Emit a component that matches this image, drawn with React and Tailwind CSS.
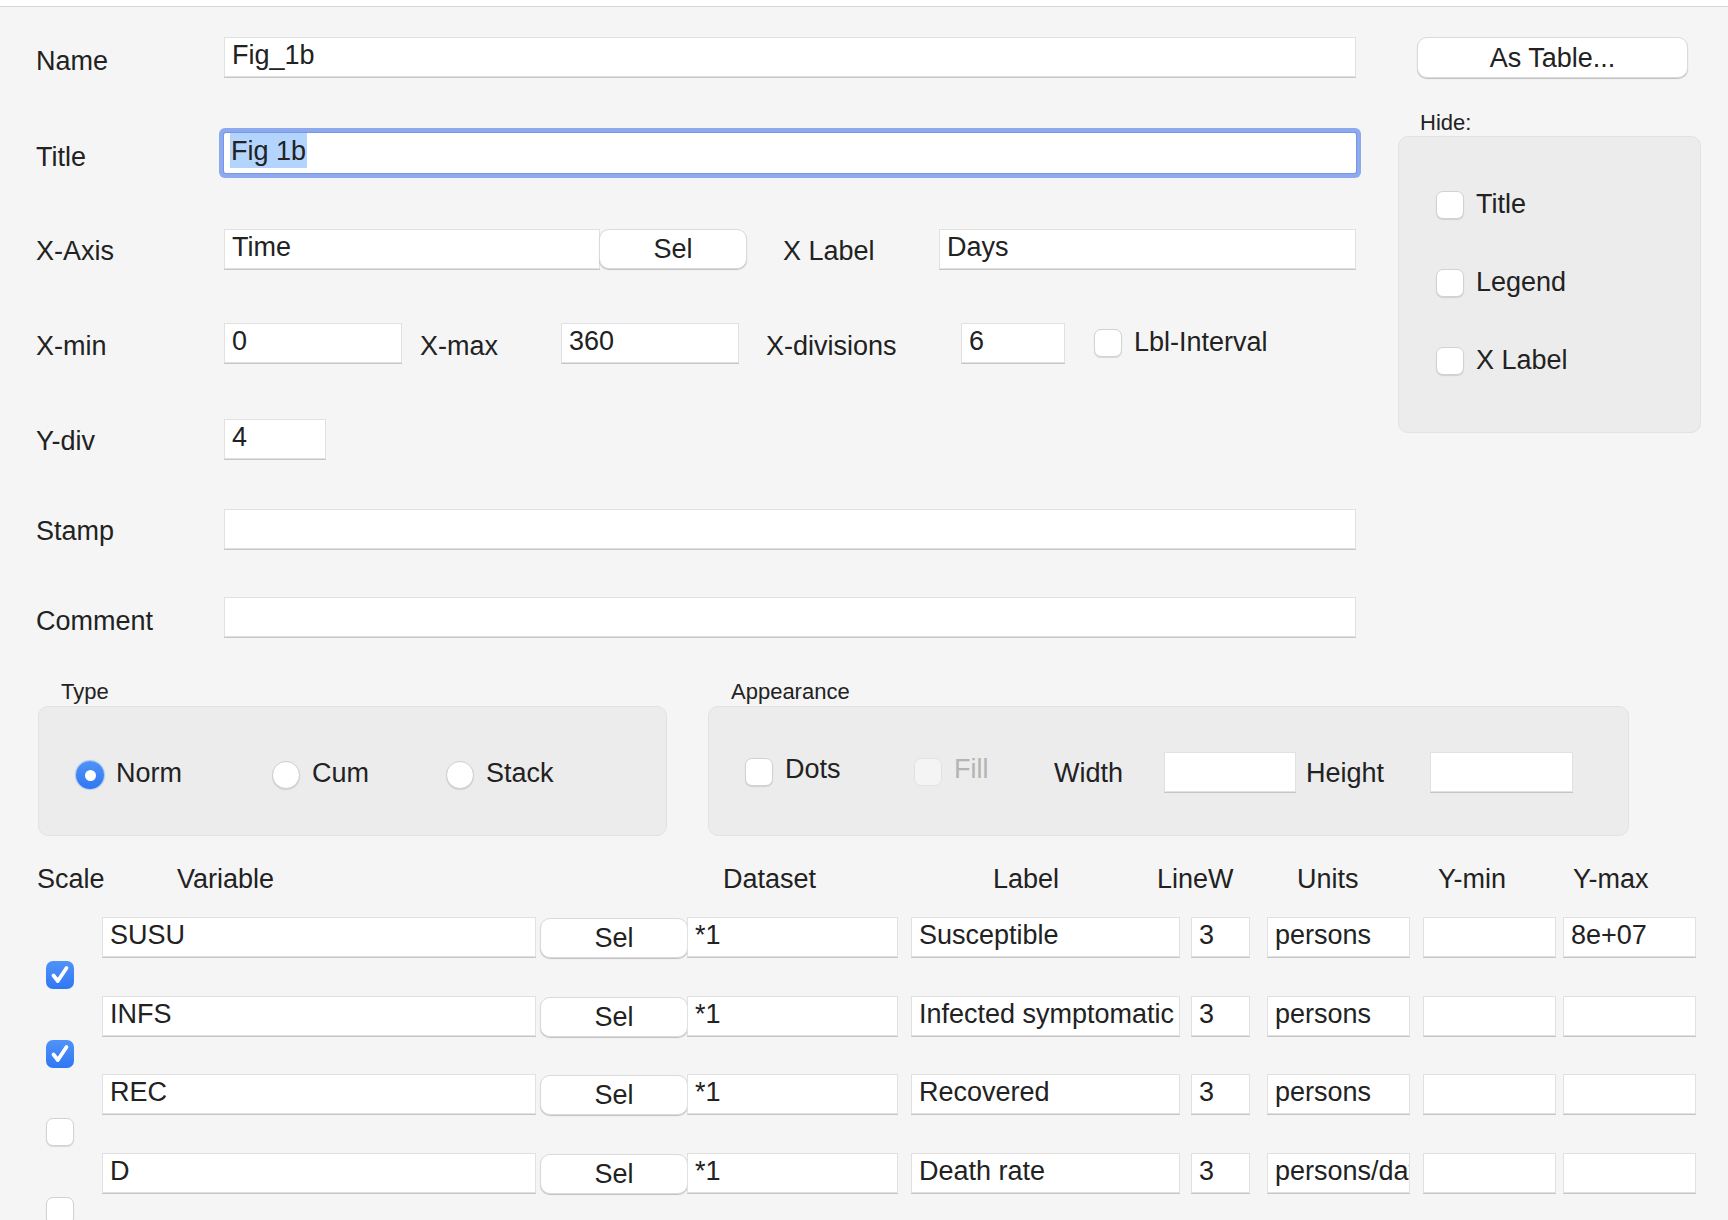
import React from "react";

const Field = ({ w, children, className = "" }) => (
  <div
    className={`h-[40px] shrink-0 bg-white border border-[#e1e1e1] shadow-[0_1px_0_#c6c6c6] pl-[7px] pt-[4px] text-[27px] leading-[26px] whitespace-nowrap overflow-hidden ${w} ${className}`}
  >
    {children}
  </div>
);

const Button = ({ w, children, className = "" }) => (
  <div
    className={`h-[40px] shrink-0 bg-white rounded-[10px] border border-[#dadada] shadow-[0_1px_1px_rgba(0,0,0,0.22)] flex items-center justify-center text-[27px] leading-[26px] ${w} ${className}`}
  >
    {children}
  </div>
);

const Check = ({ checked = false, disabled = false, className = "" }) =>
  checked ? (
    <div
      className={`w-[28px] h-[28px] shrink-0 rounded-[7px] bg-gradient-to-b from-[#4f93f8] to-[#2f77f3] flex items-center justify-center ${className}`}
    >
      <svg width="26" height="26" viewBox="0 0 26 26" fill="none">
        <path
          d="M6.5 13.5l4.3 5.5L19.5 6"
          stroke="white"
          strokeWidth="3.8"
          strokeLinecap="round"
          strokeLinejoin="round"
        />
      </svg>
    </div>
  ) : (
    <div
      className={`w-[28px] h-[28px] shrink-0 rounded-[7px] border ${
        disabled
          ? "bg-[#f4f4f4] border-[#e2e2e2]"
          : "bg-white border-[#d2d2d2] shadow-[0_1px_1px_rgba(0,0,0,0.12)]"
      } ${className}`}
    />
  );

const Radio = ({ checked = false }) =>
  checked ? (
    <div className="w-[28px] h-[28px] shrink-0 rounded-full bg-gradient-to-b from-[#4f93f8] to-[#2f77f3] flex items-center justify-center shadow-[0_0_1px_1px_rgba(47,119,243,0.35)]">
      <div className="w-[11px] h-[11px] rounded-full bg-white" />
    </div>
  ) : (
    <div className="w-[28px] h-[28px] shrink-0 rounded-full bg-white border border-[#cfcfcf] shadow-[0_1px_1px_rgba(0,0,0,0.12)]" />
  );

const Label = ({ children, className = "" }) => (
  <div className={`shrink-0 text-[27px] leading-[26px] whitespace-nowrap ${className}`}>
    {children}
  </div>
);

const rows = [
  { v: "SUSU", label: "Susceptible", units: "persons", ymax: "8e+07", on: true },
  { v: "INFS", label: "Infected symptomatic", units: "persons", ymax: "", on: true },
  { v: "REC", label: "Recovered", units: "persons", ymax: "", on: false },
  { v: "D", label: "Death rate", units: "persons/day", ymax: "", on: false },
];

export default function App() {
  return (
    <div className="w-[1728px] h-[1220px] overflow-hidden bg-[#f5f5f5] text-[#222222] font-['Liberation_Sans',Arial,Helvetica,sans-serif]">
      <div className="h-[7px] bg-white border-b border-[#d8d8d8]" />

      {/* Top section */}
      <div className="flex items-start pt-[30px]">
        <div className="w-[1356px] shrink-0 flex flex-col">
          <div className="flex items-start">
            <Label className="w-[224px] pl-[36px] mt-[11px]">Name</Label>
            <Field w="w-[1132px]">Fig_1b</Field>
          </div>

          <div className="flex items-start mt-[56px]">
            <Label className="w-[224px] pl-[36px] mt-[11px]">Title</Label>
            <div className="w-[1132px] h-[40px] shrink-0 bg-white rounded-[2px] shadow-[0_0_0_1px_#7896e6,0_0_0_5px_#8eaaee] pl-[6px] text-[27px] leading-[26px] whitespace-nowrap overflow-hidden">
              <span className="inline-block bg-[#b3d4fd] pt-[5px] pb-[4px] px-[1px]">Fig 1b</span>
            </div>
          </div>

          <div className="flex items-start mt-[56px]">
            <Label className="w-[224px] pl-[36px] mt-[9px]">X-Axis</Label>
            <Field w="w-[376px]">Time</Field>
            <Button w="w-[148px]" className="-ml-[1px]">Sel</Button>
            <Label className="w-[156px] ml-[36px] mt-[9px]">X Label</Label>
            <Field w="w-[417px]">Days</Field>
          </div>

          <div className="flex items-start mt-[54px]">
            <Label className="w-[224px] pl-[36px] mt-[10px]">X-min</Label>
            <Field w="w-[178px]">0</Field>
            <Label className="w-[141px] ml-[18px] mt-[10px]">X-max</Label>
            <Field w="w-[178px]">360</Field>
            <Label className="w-[195px] ml-[27px] mt-[10px]">X-divisions</Label>
            <Field w="w-[104px]">6</Field>
            <div className="flex items-center h-[40px] ml-[29px]">
              <Check />
              <span className="ml-[12px] text-[27px] leading-[26px] -mt-[3px]">Lbl-Interval</span>
            </div>
          </div>

          <div className="flex items-start mt-[56px]">
            <Label className="w-[224px] pl-[36px] mt-[9px]">Y-div</Label>
            <Field w="w-[102px]">4</Field>
          </div>

          <div className="flex items-start mt-[50px]">
            <Label className="w-[224px] pl-[36px] mt-[9px]">Stamp</Label>
            <Field w="w-[1132px]"></Field>
          </div>

          <div className="flex items-start mt-[48px]">
            <Label className="w-[224px] pl-[36px] mt-[11px]">Comment</Label>
            <Field w="w-[1132px]"></Field>
          </div>
        </div>

        {/* Right column */}
        <div className="ml-[42px] w-[303px] shrink-0 flex flex-col">
          <Button w="w-[271px]" className="ml-[19px] h-[41px]">As Table...</Button>
          <div className="ml-[22px] mt-[34px] text-[22px] leading-[22px]">Hide:</div>
          <div className="mt-[2px] h-[297px] rounded-[10px] bg-[#ececec] border border-[#e2e2e2] pl-[37px] pt-[54px] flex flex-col gap-[50px]">
            {["Title", "Legend", "X Label"].map((t) => (
              <div key={t} className="flex items-center h-[28px]">
                <Check />
                <span className="ml-[12px] text-[27px] leading-[26px] -mt-[3px]">{t}</span>
              </div>
            ))}
          </div>
        </div>
      </div>

      {/* Type / Appearance */}
      <div className="flex items-start mt-[44px]">
        <div className="ml-[38px] w-[629px] shrink-0">
          <div className="pl-[23px] text-[22px] leading-[22px]">Type</div>
          <div className="mt-[3px] h-[130px] rounded-[10px] bg-[#ececec] border border-[#e2e2e2] flex items-center pl-[37px] pt-[8px]">
            <div className="w-[196px] flex items-center">
              <Radio checked />
              <span className="ml-[12px] text-[27px] leading-[26px] -mt-[5px]">Norm</span>
            </div>
            <div className="w-[174px] flex items-center">
              <Radio />
              <span className="ml-[12px] text-[27px] leading-[26px] -mt-[5px]">Cum</span>
            </div>
            <div className="flex items-center">
              <Radio />
              <span className="ml-[12px] text-[27px] leading-[26px] -mt-[5px]">Stack</span>
            </div>
          </div>
        </div>

        <div className="ml-[41px] w-[921px] shrink-0">
          <div className="pl-[23px] text-[22px] leading-[22px]">Appearance</div>
          <div className="mt-[3px] h-[130px] rounded-[10px] bg-[#ececec] border border-[#e2e2e2] flex items-center pl-[36px] pt-[2px]">
            <div className="w-[169px] flex items-center">
              <Check />
              <span className="ml-[12px] text-[27px] leading-[26px] -mt-[6px]">Dots</span>
            </div>
            <div className="w-[140px] flex items-center">
              <Check disabled />
              <span className="ml-[12px] text-[27px] leading-[26px] -mt-[6px] text-[#b4b4b4]">Fill</span>
            </div>
            <div className="w-[110px] text-[27px] leading-[26px] pt-[2px]">Width</div>
            <Field w="w-[132px]"></Field>
            <div className="w-[124px] ml-[10px] text-[27px] leading-[26px] pt-[2px]">Height</div>
            <Field w="w-[143px]"></Field>
          </div>
        </div>
      </div>

      {/* Table header */}
      <div className="flex items-center mt-[28px] pl-[37px] h-[30px] text-[27px] leading-[30px] whitespace-nowrap">
        <div className="w-[140px] shrink-0">Scale</div>
        <div className="w-[546px] shrink-0">Variable</div>
        <div className="w-[270px] shrink-0">Dataset</div>
        <div className="w-[164px] shrink-0">Label</div>
        <div className="w-[140px] shrink-0">LineW</div>
        <div className="w-[141px] shrink-0">Units</div>
        <div className="w-[135px] shrink-0">Y-min</div>
        <div className="shrink-0">Y-max</div>
      </div>

      {/* Table rows */}
      <div className="mt-[23px] flex flex-col">
        {rows.map((r) => (
          <div key={r.v} className="flex items-start h-[78.67px] pl-[46px] shrink-0">
            <Check checked={r.on} className="mt-[44px]" />
            <Field w="w-[434px]" className="ml-[28px]">{r.v}</Field>
            <Button w="w-[148px]" className="ml-[4px] mt-[1px]">Sel</Button>
            <Field w="w-[211px]" className="-ml-[1px]">*1</Field>
            <Field w="w-[269px]" className="ml-[13px]">{r.label}</Field>
            <Field w="w-[59px]" className="ml-[11px]">3</Field>
            <Field w="w-[143px]" className="ml-[17px]">{r.units}</Field>
            <Field w="w-[133px]" className="ml-[13px]"></Field>
            <Field w="w-[133px]" className="ml-[7px]">{r.ymax}</Field>
          </div>
        ))}
      </div>
    </div>
  );
}
